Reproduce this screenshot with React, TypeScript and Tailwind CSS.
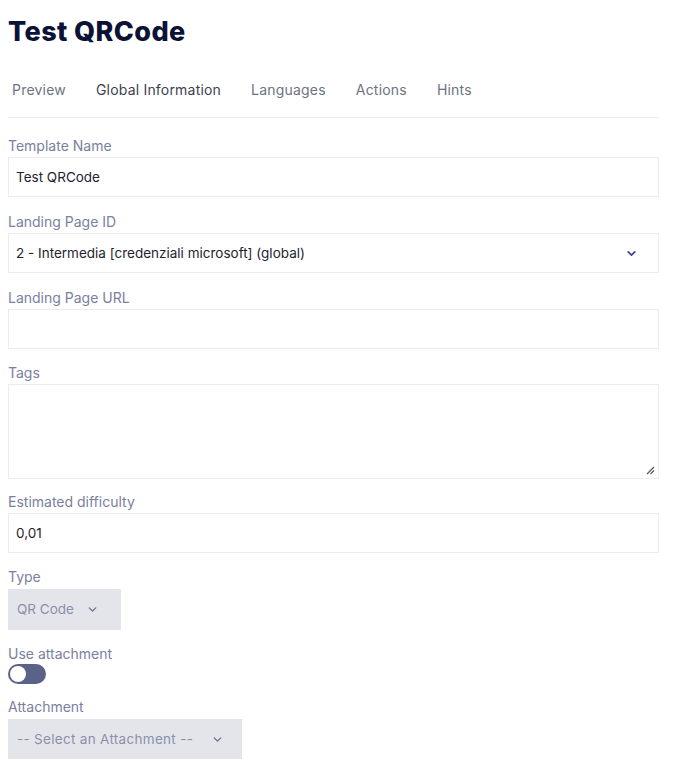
import { ChevronDown } from "lucide-react";

const font = { fontFamily: "Inter, 'Noto Sans', sans-serif" };

function Label({ children, gap = "mb-[3px]" }: { children: React.ReactNode; gap?: string }) {
  return <div className={`text-[14px] leading-[16px] text-[#7a80a0] ${gap}`}>{children}</div>;
}

function TextBox({ value, tall }: { value?: string; tall?: boolean }) {
  return (
    <div
      className={`relative border border-[#ececec] bg-white pl-[7px] flex items-center text-[13.5px] text-[#1f2330] ${
        tall ? "h-[95px]" : "h-[40px]"
      }`}
    >
      {value}
      {tall && (
        <svg className="absolute right-[3px] bottom-[3px]" width="9" height="9" viewBox="0 0 9 9">
          <path d="M1 8 L8 1 M4.5 8 L8 4.5" stroke="#555" strokeWidth="1.2" />
        </svg>
      )}
    </div>
  );
}

export default function App() {
  return (
    <div style={font} className="bg-white w-[677px] min-h-[771px] pl-[8px] pr-[18px] pt-[16px]">
      <h1 className="text-[27px] leading-[32px] font-extrabold text-[#0c1136] tracking-[0.4px]">Test QRCode</h1>

      {/* tab strip */}
      <div className="mt-[34px] flex gap-[30px] pl-[4px] pb-[19px] border-b border-[#ececec] text-[14px] leading-[16px] tracking-[0.2px]">
        <span className="text-[#6e7382]">Preview</span>
        <span className="text-[#3d4150]">Global Information</span>
        <span className="text-[#6e7382]">Languages</span>
        <span className="text-[#6e7382]">Actions</span>
        <span className="text-[#6e7382]">Hints</span>
      </div>

      <div className="mt-[20px]">
        <Label>Template Name</Label>
        <TextBox value="Test QRCode" />
      </div>

      <div className="mt-[17px]">
        <Label>Landing Page ID</Label>
        <div className="border border-[#ececec] h-[40px] flex items-center justify-between pl-[7px] pr-[20px] text-[13.5px] text-[#1f2330]">
          <span>2 - Intermedia [credenziali microsoft] (global)</span>
          <ChevronDown size={13} strokeWidth={3} className="text-[#3c3f8f]" />
        </div>
      </div>

      <div className="mt-[17px]">
        <Label>Landing Page URL</Label>
        <TextBox />
      </div>

      <div className="mt-[16px]">
        <Label>Tags</Label>
        <TextBox tall />
      </div>

      <div className="mt-[15px]">
        <Label>Estimated difficulty</Label>
        <TextBox value="0,01" />
      </div>

      <div className="mt-[16px]">
        <Label gap="mb-[4px]">Type</Label>
        <div className="w-[113px] h-[41px] bg-[#e4e5ea] flex items-center gap-[12px] pl-[9px] text-[13.5px] text-[#8a90aa]">
          <span>QR Code</span>
          <ChevronDown size={13} strokeWidth={2.5} className="text-[#6b7090]" />
        </div>
      </div>

      <div className="mt-[16px]">
        <Label gap="mb-[2px]">Use attachment</Label>
        <div className="w-[38px] h-[20px] rounded-full bg-[#5b6288] p-[2px] flex items-center">
          <div className="w-[16px] h-[16px] rounded-full bg-white" />
        </div>
      </div>

      <div className="mt-[15px]">
        <Label gap="mb-[4px]">Attachment</Label>
        <div className="w-[234px] h-[40px] bg-[#e4e5ea] flex items-center gap-[18px] pl-[9px] text-[13.5px] text-[#8a90aa]">
          <span className="tracking-[0.3px]">-- Select an Attachment --</span>
          <ChevronDown size={13} strokeWidth={2.5} className="text-[#6b7090]" />
        </div>
      </div>
    </div>
  );
}
